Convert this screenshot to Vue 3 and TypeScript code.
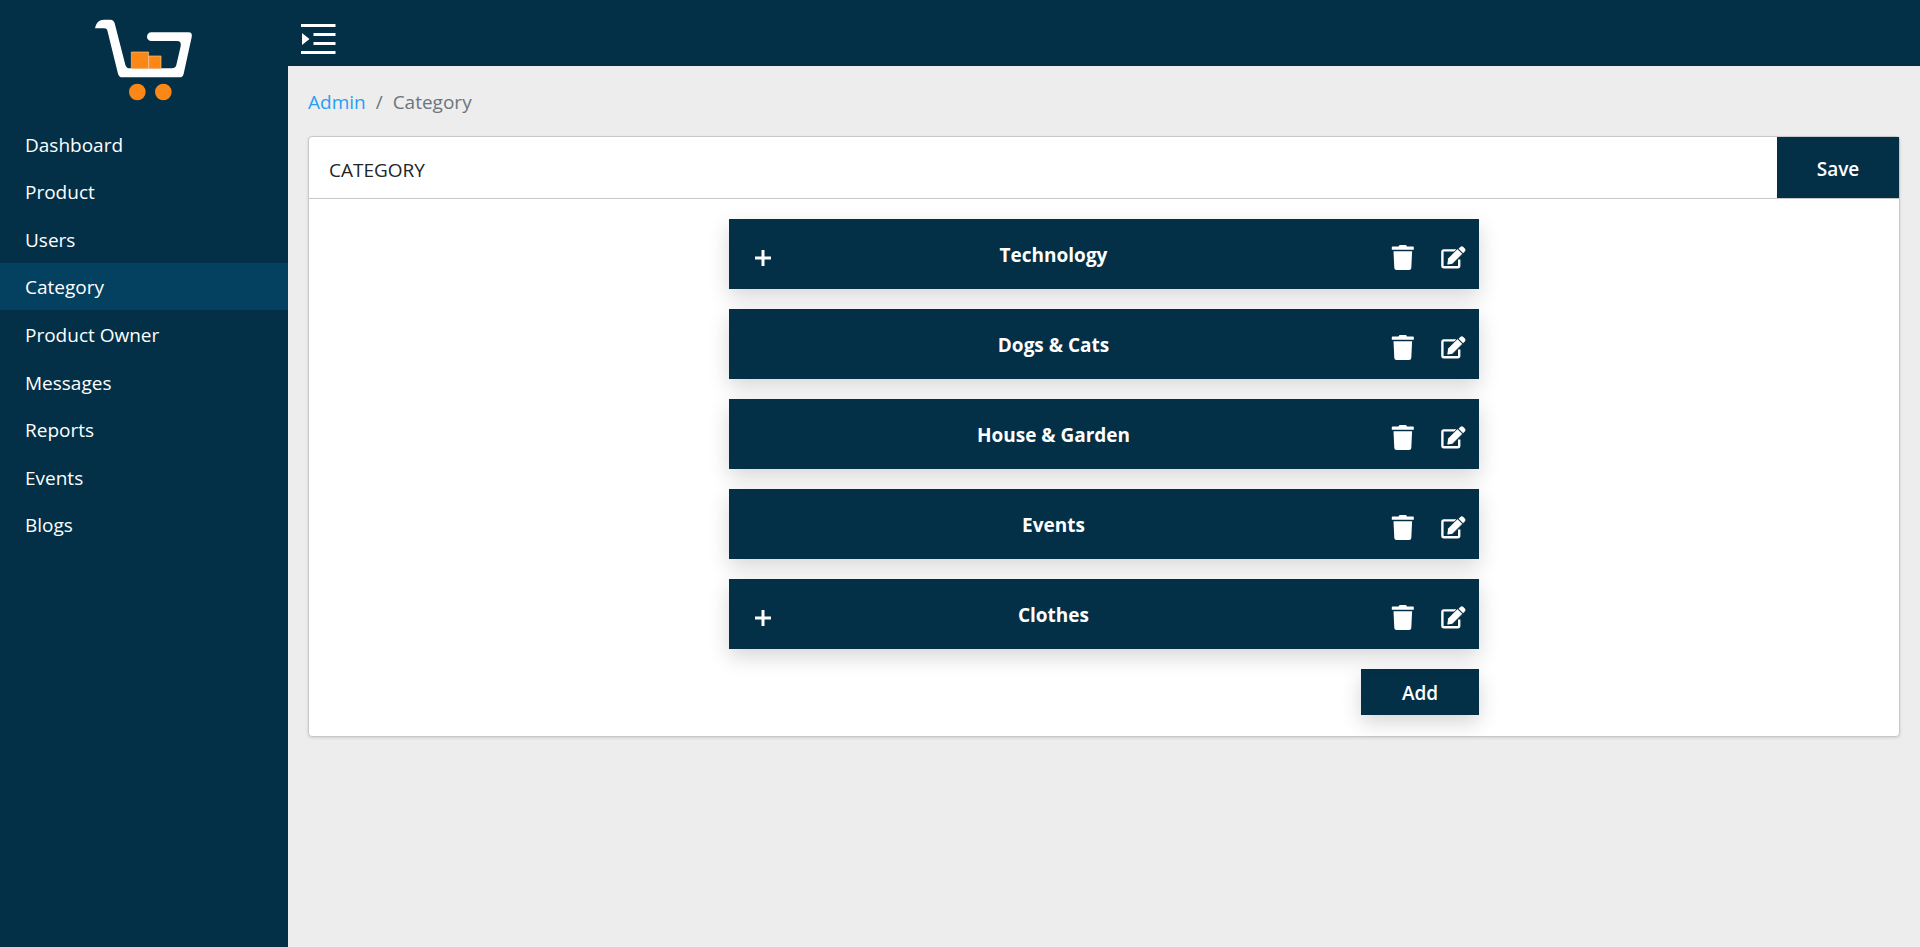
<script setup lang="ts">
import { ref } from 'vue'

interface Category {
  name: string
  expandable: boolean
}

const navItems: string[] = [
  'Dashboard',
  'Product',
  'Users',
  'Category',
  'Product Owner',
  'Messages',
  'Reports',
  'Events',
  'Blogs',
]
const active = ref('Category')

const categories: Category[] = [
  { name: 'Technology', expandable: true },
  { name: 'Dogs & Cats', expandable: false },
  { name: 'House & Garden', expandable: false },
  { name: 'Events', expandable: false },
  { name: 'Clothes', expandable: true },
]
</script>

<template>
  <div class="layout">
    <aside class="sidebar">
      <a class="logo" href="#" aria-label="Home">
        <svg viewBox="0 0 390 330" width="130" height="110" aria-hidden="true">
          <path
            fill="#fff"
            d="M45 70C48 54 57 44 72 44H91Q101 44 104 55L136 179Q139 190 149 190H276Q286 190 289 180L302 124Q305 108 291 108H214A12.500 12.500 0 0 1 214 82H326Q338 82 335 97L311 206Q309 217 298 217H127Q117 217 114 206L83 80Q81 70 73 70Z"
          />
          <path fill="#fa8716" stroke="#f3c79c" stroke-width="2" d="M154 141H206V191H154ZM206 153H243V191H206Z" />
          <circle cx="172" cy="261" r="25" fill="#fa8716" />
          <circle cx="250" cy="261" r="25" fill="#fa8716" />
        </svg>
      </a>
      <nav class="nav">
        <a
          v-for="item in navItems"
          :key="item"
          href="#"
          class="nav-link"
          :class="{ active: item === active }"
          @click.prevent="active = item"
        >{{ item }}</a>
      </nav>
    </aside>

    <div class="main">
      <header class="topbar">
        <button class="icon-button" type="button" aria-label="Toggle menu">
          <svg viewBox="0 0 36 32" width="36" height="32" aria-hidden="true">
            <path fill="#fff" d="M1 1h34.500v3H1zM13.500 10h22v3h-22zM13.500 19h22v3h-22zM1 28h34.500v3H1zM2 10l7.500 6L2 22z" />
          </svg>
        </button>
      </header>

      <main class="content">
        <nav class="breadcrumb" aria-label="Breadcrumb">
          <a href="#">Admin</a>
          <span>/</span>
          <span>Category</span>
        </nav>

        <section class="card">
          <div class="card-header">
            <h1>CATEGORY</h1>
            <button class="save" type="button">Save</button>
          </div>
          <div class="card-body">
            <ul class="list">
              <li v-for="category in categories" :key="category.name" class="row">
                <button v-if="category.expandable" class="expand" type="button" :aria-label="`Expand ${category.name}`">
                  <svg viewBox="0 0 16 16" width="16" height="16" aria-hidden="true">
                    <path fill="#fff" d="M6.500 0h3v6.500H16v3H9.500V16h-3V9.500H0v-3h6.500z" />
                  </svg>
                </button>
                <span class="name">{{ category.name }}</span>
                <span class="actions">
                  <button class="icon-button" type="button" :aria-label="`Delete ${category.name}`">
                    <svg viewBox="0 0 24 26" width="24" height="26" aria-hidden="true">
                      <path
                        fill="#fff"
                        d="M1.600 1.500H7.500L8.500 0h6.500l1 1.500h6q.8 0 .8.800V4.800H.8V2.300q0-.8.8-.8zM2.500 6.300h18.600l-.8 16.800q-.1 2-2.200 2H5.500q-2.100 0-2.200-2z"
                      />
                    </svg>
                  </button>
                  <button class="icon-button" type="button" :aria-label="`Edit ${category.name}`">
                    <svg viewBox="0 0 26 24" width="26" height="24" aria-hidden="true">
                      <path
                        fill="none"
                        stroke="#fff"
                        stroke-width="2.400"
                        d="M16 4.400H3.800Q2.400 4.400 2.400 5.800V19.800Q2.400 21.200 3.800 21.200H17.800Q19.200 21.200 19.200 19.800V13.500"
                      />
                      <path
                        fill="#fff"
                        stroke="#033047"
                        stroke-width="1"
                        d="M17.500 2.700L22.700 7.900 12.300 18.300 8 19.100Q6.700 19.200 6.900 17.900L7.500 12.700Z"
                      />
                      <path fill="#fff" d="M18.600 2.700L20.300 1Q21.800-.3 23.300 1L24.800 2.500Q26.100 4 24.800 5.500L23.100 7.200Z" />
                    </svg>
                  </button>
                </span>
              </li>
            </ul>
            <button class="add" type="button">Add</button>
          </div>
        </section>
      </main>
    </div>
  </div>
</template>

<style>
body {
  margin: 0;
}
</style>

<style scoped>
.layout {
  display: flex;
  min-height: 100vh;
  background: #ededed;
  color: #212529;
  font-family: 'Segoe UI', 'Open Sans', 'Noto Sans', sans-serif;
  font-size: 19px;
  line-height: 30px;
}

a {
  text-decoration: none;
}

button {
  border: 0;
  padding: 0;
  background: none;
  color: inherit;
  font: inherit;
  cursor: pointer;
}

svg {
  display: block;
}

.sidebar {
  flex: 0 0 288px;
  background: #033047;
  color: #fff;
}

.logo {
  display: flex;
  justify-content: center;
  padding: 5px 0 5px 2px;
}

.nav {
  display: grid;
  grid-template-rows: repeat(9, 1fr);
  height: 428px;
}

.nav-link {
  display: flex;
  align-items: center;
  padding: 2px 25px 0;
  color: #fff;
}

.nav-link.active {
  background: #04405f;
}

.main {
  flex: 1;
  min-width: 0;
}

.topbar {
  display: flex;
  align-items: center;
  height: 66px;
  padding: 0 12px;
  box-sizing: border-box;
  background: #033047;
}

.topbar .icon-button {
  margin-top: 12px;
}

.content {
  padding: 21px 20px;
}

.breadcrumb {
  display: flex;
  gap: 10px;
  margin-bottom: 19px;
  color: #6c757d;
}

.breadcrumb a {
  color: #2a9df4;
}

.card {
  border: 1px solid #c8c8c8;
  border-radius: 4px;
  background: #fff;
  box-shadow: 0 1px 3px rgba(0, 0, 0, 0.12);
}

.card-header {
  display: flex;
  align-items: stretch;
  justify-content: space-between;
  height: 61px;
  border-bottom: 1px solid #c8c8c8;
}

h1 {
  margin: 0;
  padding-left: 20px;
  font-size: 19px;
  font-weight: 400;
  line-height: 66px;
}

.save,
.add {
  padding-top: 2px;
  background: #033047;
  color: #fff;
  font-weight: 600;
}

.save {
  width: 122px;
}

.card-body {
  display: flex;
  flex-direction: column;
  gap: 20px;
  max-width: 750px;
  margin: 0 auto;
  padding: 20px 0 21px;
}

.list {
  display: flex;
  flex-direction: column;
  gap: 20px;
  margin: 0;
  padding: 0;
  list-style: none;
}

.row {
  position: relative;
  display: flex;
  align-items: center;
  height: 70px;
  background: #033047;
  color: #fff;
  box-shadow: 0 8px 20px rgba(0, 0, 0, 0.16);
}

.expand {
  position: absolute;
  top: 31px;
  left: 26px;
}

.name {
  flex: 1;
  padding-top: 2px;
  font-weight: 700;
  text-align: center;
}

.actions {
  display: flex;
  align-items: center;
  gap: 25px;
  padding: 8px 13px 0;
}

.add {
  align-self: flex-end;
  width: 118px;
  height: 46px;
  box-shadow: 0 8px 20px rgba(0, 0, 0, 0.16);
}
</style>
